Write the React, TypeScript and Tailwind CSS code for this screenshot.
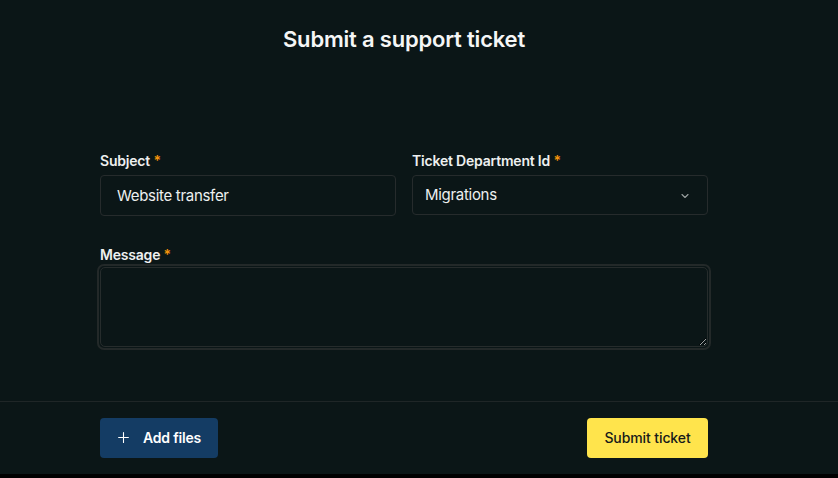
import React from "react";

export default function App() {
  const font = { fontFamily: "Inter, 'Noto Sans', sans-serif" };
  return (
    <div className="w-[838px] h-[478px] bg-black overflow-hidden" style={font}>
      <div className="h-[474px] bg-[#0b1617] flex flex-col">
        <div className="w-[808px] flex flex-col flex-1">
          <h1 className="text-center text-[22px] leading-[30px] font-semibold text-[#f5f6f6] pt-[24px] tracking-[-0.2px]">
            Submit a support ticket
          </h1>
          <div className="px-[100px] pt-[98px] flex flex-col">
            <div className="grid grid-cols-2 gap-4">
              <div className="flex flex-col">
                <label className="text-[14px] leading-[18px] font-semibold text-[#eef0f0] tracking-[-0.2px]">
                  Subject <span className="text-[#f5940b]">*</span>
                </label>
                <div className="mt-[5px] h-[41px] border border-[#262b2c] rounded-[4px] flex items-center pl-4 pt-[2px] text-[15px] tracking-[-0.3px] text-[#eef0f0]">
                  Website transfer
                </div>
              </div>
              <div className="flex flex-col">
                <label className="text-[14px] leading-[18px] font-semibold text-[#eef0f0] tracking-[-0.2px]">
                  Ticket Department Id <span className="text-[#f5940b]">*</span>
                </label>
                <div className="mt-[5px] h-[40px] border border-[#262b2c] rounded-[4px] flex items-center justify-between pl-3 pr-4 pt-[1px] text-[15px] tracking-[-0.3px] text-[#eef0f0]">
                  <span>Migrations</span>
                  <svg width="12" height="12" viewBox="0 0 24 24" fill="none" stroke="#9aa0a0" strokeWidth="2.2" strokeLinecap="round" strokeLinejoin="round">
                    <path d="M6 9l6 6 6-6" />
                  </svg>
                </div>
              </div>
            </div>
            <label className="mt-[30px] text-[14px] leading-[18px] font-semibold text-[#eef0f0] tracking-[-0.2px]">
              Message <span className="text-[#f5940b]">*</span>
            </label>
            <div className="mt-[0px] p-[1px] border-2 border-[#232929] rounded-[7px] -mx-[3px]">
              <textarea className="block w-full h-[80px] bg-transparent border border-[#262c2c] rounded-[5px] outline-none resize-y" />
            </div>
          </div>
          <div className="flex-1" />
        </div>
        <div className="border-t border-[#1f2627] h-[73px] flex items-center">
          <div className="w-[808px] px-[100px] flex items-center justify-between pb-[1px]">
            <button className="h-[40px] w-[118px] rounded-[4px] bg-[#143c64] text-white text-[14px] font-semibold flex items-center justify-center gap-[13px] tracking-[-0.2px]">
              <svg width="13" height="13" viewBox="0 0 24 24" fill="none" stroke="#ffffff" strokeWidth="2" strokeLinecap="round">
                <path d="M12 3v18M3 12h18" />
              </svg>
              Add files
            </button>
            <button className="h-[40px] w-[121px] rounded-[4px] bg-[#ffe44c] text-[#171a1a] text-[14px] font-medium flex items-center justify-center tracking-[-0.1px]">
              Submit ticket
            </button>
          </div>
        </div>
      </div>
    </div>
  );
}
